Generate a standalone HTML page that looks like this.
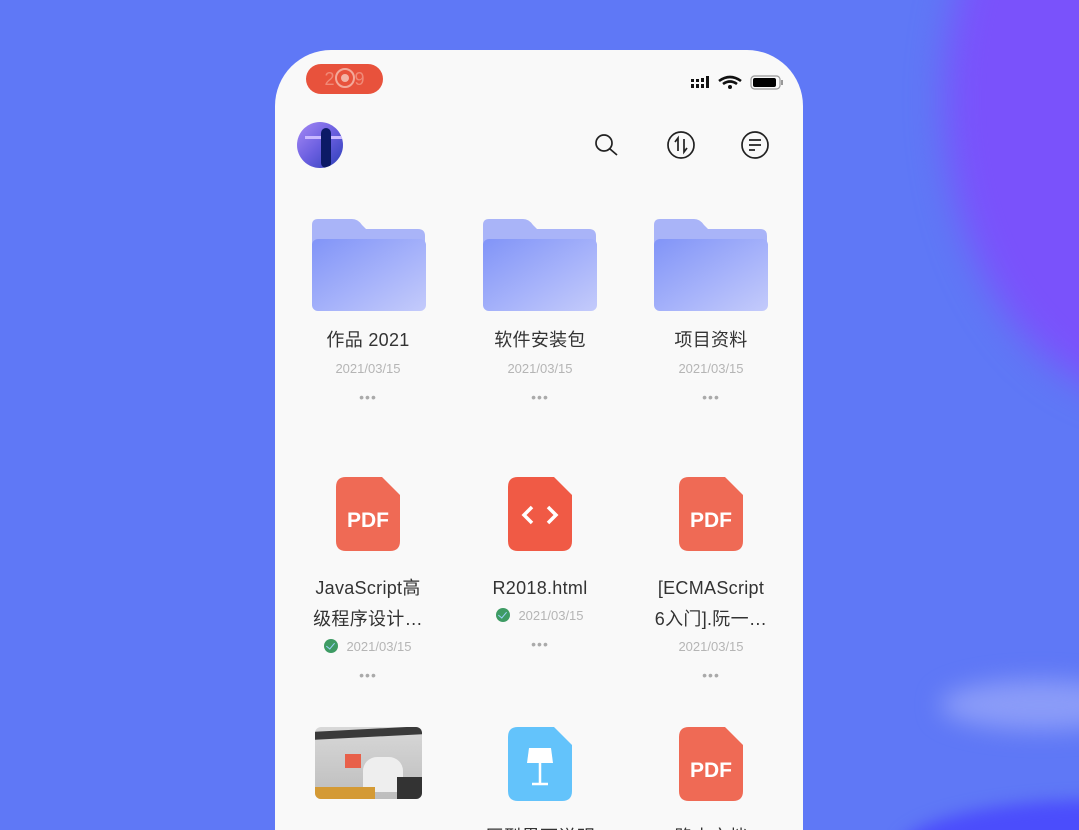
<!DOCTYPE html>
<html><head><meta charset="utf-8">
<style>
*{margin:0;padding:0;box-sizing:border-box}
html,body{width:1079px;height:830px;overflow:hidden}
body{position:relative;font-family:"Liberation Sans","Noto Sans CJK SC",sans-serif;background:#5f78f6;}
.bg1{position:absolute;left:945px;top:-200px;width:420px;height:600px;border-radius:50%;background:#7a52fb;filter:blur(18px)}
.bg2{position:absolute;left:900px;top:800px;width:400px;height:100px;border-radius:50%;background:#4b4dfc;filter:blur(8px)}
.bg3{position:absolute;left:940px;top:680px;width:200px;height:50px;border-radius:50%;background:#8b9cf8;filter:blur(12px)}
.phone{position:absolute;left:275px;top:50px;width:528px;height:780px;background:#f9f9f9;border-radius:56px 56px 0 0;overflow:hidden}
.pill{position:absolute;left:31px;top:14px;width:77px;height:30px;border-radius:15px;background:#e8523c;color:#f08a78;font-size:18px;text-align:center;line-height:30px}
.cell{position:absolute;width:170px;text-align:center;transform:translateX(-85px)}
.name{font-size:18px;color:#333;line-height:31px;letter-spacing:.3px}
.date{font-size:13px;color:#b5b5b5;line-height:18px}
.dots{color:#aaa;font-size:14px;letter-spacing:1px;line-height:10px}
.ck{display:inline-block;width:14px;height:14px;border-radius:50%;background:#3e9b64;vertical-align:-2px;margin-right:8px;position:relative}
.ck:after{content:"";position:absolute;left:4px;top:2px;width:4px;height:7px;border:solid #9fd3ff;border-width:0 1.5px 1.5px 0;transform:rotate(40deg)}
</style></head><body>
<div class="bg1"></div><div class="bg3"></div><div class="bg2"></div>
<div class="phone">
 <div class="pill">2<span style="display:inline-block;width:20px;height:20px;border:2px solid #f3a99a;border-radius:50%;vertical-align:-3px;position:relative"><span style="position:absolute;left:4px;top:4px;width:8px;height:8px;background:#f3b3a5;border-radius:50%"></span></span>9</div>
 <svg style="position:absolute;left:414px;top:24px" width="100" height="20">
  <g fill="#111"><rect x="2" y="10" width="3" height="4"/><rect x="2" y="5" width="3" height="3"/><rect x="7" y="10" width="3" height="4"/><rect x="7" y="5" width="3" height="3"/><rect x="12" y="10" width="3" height="4"/><rect x="12" y="4" width="3" height="4"/><rect x="17" y="2" width="3" height="12"/></g>
  <path d="M30 7 Q41 -1 52 7" stroke="#111" stroke-width="2.6" fill="none"/><path d="M34 10 Q41 5 48 10" stroke="#111" stroke-width="2.6" fill="none"/><circle cx="41" cy="13" r="2" fill="#111"/>
  <rect x="62" y="2" width="29" height="13" rx="3.5" fill="none" stroke="#999" stroke-width="1.2"/><rect x="64" y="4" width="23" height="9" rx="2" fill="#000"/><rect x="92" y="6" width="2" height="5" fill="#999"/>
 </svg>
 <div style="position:absolute;left:22px;top:72px;width:46px;height:46px;border-radius:50%;background:linear-gradient(135deg,#a68af5 0%,#6b5fe0 50%,#2c3fb8 100%);overflow:hidden">
  <div style="position:absolute;left:8px;top:14px;width:38px;height:3px;background:#c9b8ff"></div>
  <div style="position:absolute;left:24px;top:6px;width:10px;height:40px;background:#0c1a66;border-radius:5px"></div></div>
 <svg style="position:absolute;left:318px;top:82px" width="30" height="30"><circle cx="11" cy="11" r="8" fill="none" stroke="#222" stroke-width="1.7"/><path d="M17 17 L24 23" stroke="#222" stroke-width="1.7"/></svg>
 <svg style="position:absolute;left:391px;top:80px" width="30" height="30"><circle cx="15" cy="15" r="13" fill="none" stroke="#222" stroke-width="1.7"/><path d="M9 12 L12 8 V21 M18 9 V22 L21 18" stroke="#222" stroke-width="1.7" fill="none"/></svg>
 <svg style="position:absolute;left:465px;top:80px" width="30" height="30"><circle cx="15" cy="15" r="13" fill="none" stroke="#222" stroke-width="1.7"/><path d="M9 10 H21 M9 15 H21 M9 20 H15" stroke="#222" stroke-width="1.7"/></svg>

 <svg style="position:absolute;left:37px;top:169px" width="114" height="92"><defs><linearGradient id="f" x1="0" y1="0" x2="1" y2="1"><stop offset="0" stop-color="#8194f8"/><stop offset="1" stop-color="#c4cbfb"/></linearGradient></defs><path d="M6 0 H40 Q46 0 50 6 L54 10 H106 Q113 10 113 17 V30 H0 V6 Q0 0 6 0Z" fill="#a9b4f8"/><rect x="0" y="20" width="114" height="72" rx="6" fill="url(#f)"/></svg>
 <svg style="position:absolute;left:208px;top:169px" width="114" height="92"><path d="M6 0 H40 Q46 0 50 6 L54 10 H106 Q113 10 113 17 V30 H0 V6 Q0 0 6 0Z" fill="#a9b4f8"/><rect x="0" y="20" width="114" height="72" rx="6" fill="url(#f)"/></svg>
 <svg style="position:absolute;left:379px;top:169px" width="114" height="92"><path d="M6 0 H40 Q46 0 50 6 L54 10 H106 Q113 10 113 17 V30 H0 V6 Q0 0 6 0Z" fill="#a9b4f8"/><rect x="0" y="20" width="114" height="72" rx="6" fill="url(#f)"/></svg>
 <div class="cell" style="left:93px;top:275px"><div class="name">作品 2021</div><div class="date" style="margin-top:4px">2021/03/15</div><div class="dots" style="margin-top:14px">•••</div></div>
 <div class="cell" style="left:265px;top:275px"><div class="name">软件安装包</div><div class="date" style="margin-top:4px">2021/03/15</div><div class="dots" style="margin-top:14px">•••</div></div>
 <div class="cell" style="left:436px;top:275px"><div class="name">项目资料</div><div class="date" style="margin-top:4px">2021/03/15</div><div class="dots" style="margin-top:14px">•••</div></div>

 <svg style="position:absolute;left:61px;top:427px" width="64" height="74"><path d="M10 0 H46 L64 18 V64 Q64 74 54 74 H10 Q0 74 0 64 V10 Q0 0 10 0Z" fill="#ef6a55"/><text x="32" y="50" text-anchor="middle" font-family="Liberation Sans" font-weight="bold" font-size="21" fill="#fff">PDF</text></svg>
 <svg style="position:absolute;left:233px;top:427px" width="64" height="74"><path d="M10 0 H46 L64 18 V64 Q64 74 54 74 H10 Q0 74 0 64 V10 Q0 0 10 0Z" fill="#f05a45"/><path d="M24 30 L16 38 L24 46 M40 30 L48 38 L40 46" stroke="#fff" stroke-width="3.5" fill="none"/></svg>
 <svg style="position:absolute;left:404px;top:427px" width="64" height="74"><path d="M10 0 H46 L64 18 V64 Q64 74 54 74 H10 Q0 74 0 64 V10 Q0 0 10 0Z" fill="#ef6a55"/><text x="32" y="50" text-anchor="middle" font-family="Liberation Sans" font-weight="bold" font-size="21" fill="#fff">PDF</text></svg>
 <div class="cell" style="left:93px;top:523px"><div class="name">JavaScript高<br>级程序设计…</div><div class="date" style="margin-top:3px"><span class="ck"></span>2021/03/15</div><div class="dots" style="margin-top:14px">•••</div></div>
 <div class="cell" style="left:265px;top:523px"><div class="name">R2018.html</div><div class="date" style="margin-top:3px"><span class="ck"></span>2021/03/15</div><div class="dots" style="margin-top:14px">•••</div></div>
 <div class="cell" style="left:436px;top:523px"><div class="name">[ECMAScript<br>6入门].阮一…</div><div class="date" style="margin-top:3px">2021/03/15</div><div class="dots" style="margin-top:14px">•••</div></div>

 <div style="position:absolute;left:40px;top:677px;width:107px;height:72px;border-radius:6px;overflow:hidden;background:linear-gradient(180deg,#d8d8d8,#bdbdbd)">
  <div style="position:absolute;left:0;top:2px;width:107px;height:8px;background:#3a3a3a;transform:skewY(-3deg)"></div>
  <div style="position:absolute;left:30px;top:27px;width:16px;height:14px;background:#e8604a"></div>
  <div style="position:absolute;left:48px;top:30px;width:40px;height:35px;border-radius:14px 14px 0 0;background:#eee"></div>
  <div style="position:absolute;left:0;top:60px;width:60px;height:12px;background:#d49a35"></div>
  <div style="position:absolute;left:82px;top:50px;width:25px;height:22px;background:#333"></div>
 </div>
 <svg style="position:absolute;left:233px;top:677px" width="64" height="74"><path d="M10 0 H46 L64 18 V64 Q64 74 54 74 H10 Q0 74 0 64 V10 Q0 0 10 0Z" fill="#63c3fb"/><path d="M21 21 H43 L45 36 H19Z" fill="#fff"/><path d="M32 36 V57 M24 57 H40" stroke="#fff" stroke-width="2.5"/></svg>
 <svg style="position:absolute;left:404px;top:677px" width="64" height="74"><path d="M10 0 H46 L64 18 V64 Q64 74 54 74 H10 Q0 74 0 64 V10 Q0 0 10 0Z" fill="#ef6a55"/><text x="32" y="50" text-anchor="middle" font-family="Liberation Sans" font-weight="bold" font-size="21" fill="#fff">PDF</text></svg>
 <div class="cell" style="left:265px;top:772px"><div class="name">原型界面说明</div></div>
 <div class="cell" style="left:436px;top:772px"><div class="name">路由文档</div></div>
</div>
</body></html>
